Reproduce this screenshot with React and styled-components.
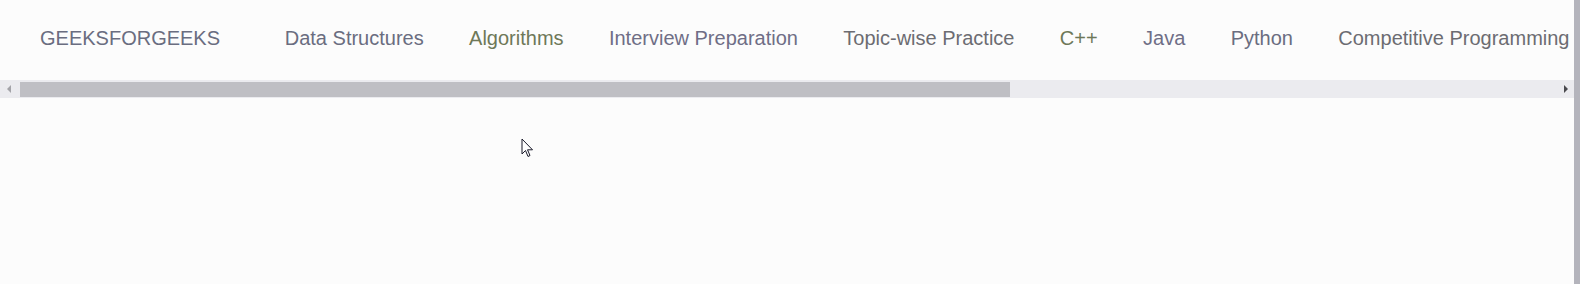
import React from "react";
import styled, { createGlobalStyle } from "styled-components";

const GlobalStyle = createGlobalStyle`
    html, body {
        margin: 0;
        padding: 0;
        background: #fcfcfc;
        font-family: "Liberation Sans", Arial, sans-serif;
    }
`;

const tones = {
    slate: "#6a6d80",
    olive: "#6e7858",
    violet: "#6f6e86",
    gray: "#6c6c72",
};

const navItems = [
    { label: "Data Structures", tone: "slate" },
    { label: "Algorithms", tone: "olive" },
    { label: "Interview Preparation", tone: "violet" },
    { label: "Topic-wise Practice", tone: "gray" },
    { label: "C++", tone: "olive" },
    { label: "Java", tone: "violet" },
    { label: "Python", tone: "slate" },
    { label: "Competitive Programming", tone: "gray" },
];

const Page = styled.div`
    position: relative;
    display: flex;
    width: 1580px;
    height: 284px;
    overflow: hidden;
`;

const Viewport = styled.div`
    flex: 1;
    min-width: 0;
    display: flex;
    flex-direction: column;
`;

const EdgeStrip = styled.div`
    width: 6px;
    background: #b4b4bc;
`;

const Navbar = styled.nav`
    display: flex;
    align-items: center;
    height: 76px;
    padding: 0 0 4px 40px;
    white-space: nowrap;
    overflow: hidden;
`;

const Logo = styled.a`
    font-size: 20px;
    color: ${tones.slate};
    text-decoration: none;
    margin-right: 42px;
    flex-shrink: 0;
`;

const NavLink = styled.a`
    font-size: 20px;
    color: ${(p) => tones[p.$tone]};
    text-decoration: none;
    padding: 0 22.7px;
    flex-shrink: 0;
`;

const Scrollbar = styled.div`
    display: flex;
    align-items: center;
    height: 18px;
    background: #ebebef;
`;

const ArrowButton = styled.div`
    width: 17px;
    height: 18px;
    display: flex;
    align-items: center;
    justify-content: center;
    flex-shrink: 0;
`;

const Track = styled.div`
    flex: 1;
    height: 100%;
    display: flex;
    align-items: center;
`;

const Thumb = styled.div`
    height: 15px;
    margin-left: 3px;
    background: #bfbfc4;
`;

const Cursor = styled.svg`
    position: absolute;
    left: 521px;
    top: 138px;
`;

const Arrow = ({ dir, color }) => (
    <svg width="6" height="8" viewBox="0 0 6 8">
        {dir === "left" ? (
            <path d="M5 0 L1 4 L5 8 Z" fill={color} />
        ) : (
            <path d="M1 0 L5 4 L1 8 Z" fill={color} />
        )}
    </svg>
);

export default function App() {
    return (
        <>
            <GlobalStyle />
            <Page>
                <Viewport>
                    <Navbar>
                        <Logo href="#">GEEKSFORGEEKS</Logo>
                        {navItems.map((item) => (
                            <NavLink key={item.label} href="#" $tone={item.tone}>
                                {item.label}
                            </NavLink>
                        ))}
                    </Navbar>
                    <Scrollbar>
                        <ArrowButton>
                            <Arrow dir="left" color="#a3a3a8" />
                        </ArrowButton>
                        <Track>
                            <Thumb style={{ width: `${(990 / 1540) * 100}%` }} />
                        </Track>
                        <ArrowButton>
                            <Arrow dir="right" color="#4a4a4e" />
                        </ArrowButton>
                    </Scrollbar>
                </Viewport>
                <EdgeStrip />
                <Cursor width="13" height="21" viewBox="0 0 13 21">
                    <path
                        d="M1 1 L1 16 L4.5 12.5 L7 18.5 L9 17.5 L6.5 11.8 L11.5 11.8 Z"
                        fill="#ffffff"
                        stroke="#1a1a2a"
                        strokeWidth="1"
                        strokeLinejoin="round"
                    />
                </Cursor>
            </Page>
        </>
    );
}
